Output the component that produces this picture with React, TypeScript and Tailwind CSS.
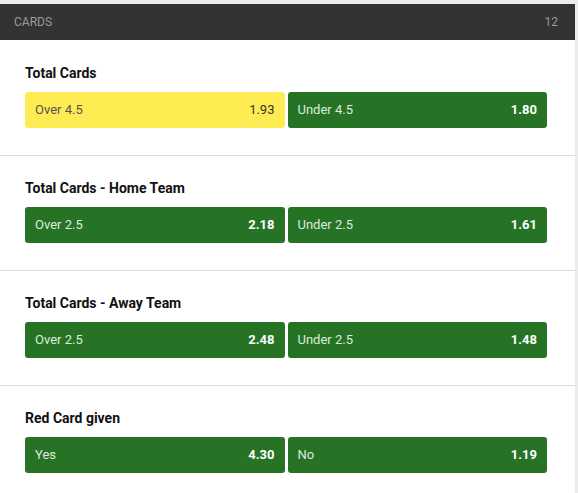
import React from "react";

type Outcome = { label: string; odds: string; selected?: boolean };
type Market = { title: string; outcomes: Outcome[] };

const markets: Market[] = [
  {
    title: "Total Cards",
    outcomes: [
      { label: "Over 4.5", odds: "1.93", selected: true },
      { label: "Under 4.5", odds: "1.80" },
    ],
  },
  {
    title: "Total Cards - Home Team",
    outcomes: [
      { label: "Over 2.5", odds: "2.18" },
      { label: "Under 2.5", odds: "1.61" },
    ],
  },
  {
    title: "Total Cards - Away Team",
    outcomes: [
      { label: "Over 2.5", odds: "2.48" },
      { label: "Under 2.5", odds: "1.48" },
    ],
  },
  {
    title: "Red Card given",
    outcomes: [
      { label: "Yes", odds: "4.30" },
      { label: "No", odds: "1.19" },
    ],
  },
];

function OutcomeButton({ outcome }: { outcome: Outcome }) {
  if (outcome.selected) {
    return (
      <button className="flex h-9 items-center justify-between rounded-[3px] bg-[#ffeb52] px-[10px] text-[13px]">
        <span className="text-[#555]">{outcome.label}</span>
        <span className="text-[#333]">{outcome.odds}</span>
      </button>
    );
  }

  return (
    <button className="flex h-9 items-center justify-between rounded-[3px] bg-[#267326] px-[10px] text-[13px]">
      <span className="text-[#dfe9df]">{outcome.label}</span>
      <span className="font-bold text-white">{outcome.odds}</span>
    </button>
  );
}

export default function App() {
  return (
    <div className="min-h-screen bg-[#ebebeb] pt-1 font-['Roboto',sans-serif]">
      <div className="w-[575px] bg-white">
        {/* HEADER */}
        <div className="flex h-9 items-center justify-between bg-[#333333] pl-[14px] pr-[17px] text-xs text-[#9a9a9a]">
          <span>CARDS</span>
          <span>12</span>
        </div>

        {/* MARKETS */}
        {markets.map((market, i) => (
          <div
            key={market.title}
            className={`pb-[27px] pl-[25px] pr-[28px] ${
              i === 0 ? "pt-[23px]" : "pt-[22px] border-t border-[#dddddd]"
            }`}
          >
            <h3 className="text-sm leading-5 font-bold text-[#111]">
              {market.title}
            </h3>

            <div className="mt-[9px] grid grid-cols-2 gap-[3px]">
              {market.outcomes.map((o) => (
                <OutcomeButton key={o.label} outcome={o} />
              ))}
            </div>
          </div>
        ))}
      </div>
    </div>
  );
}
